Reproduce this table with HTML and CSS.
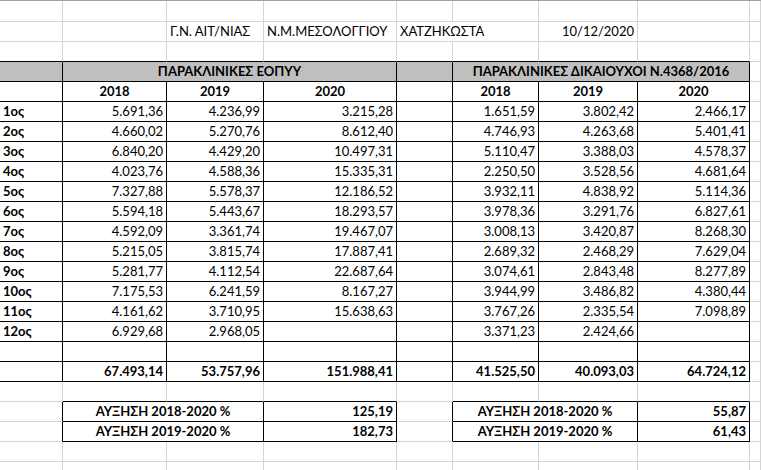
FILE: index.html
```html
<!DOCTYPE html>
<html lang="el">
<head>
<meta charset="utf-8">
<title>Παρακλινικές</title>
<link rel="stylesheet" href="styles.css">
</head>
<body>
<div class="sheet">
  <!-- row 1 -->
  <div class="c"></div><div class="c"></div><div class="c"></div><div class="c"></div><div class="c"></div><div class="c"></div><div class="c"></div><div class="c"></div><div class="c"></div>
  <!-- row 2 -->
  <div class="c"></div><div class="c"></div><div class="c">Γ.Ν. ΑΙΤ/ΝΙΑΣ</div><div class="c">Ν.Μ.ΜΕΣΟΛΟΓΓΙΟΥ</div><div class="c nogrid">ΧΑΤΖΗΚΩΣΤΑ</div><div class="c"></div><div class="c r">10/12/2020</div><div class="c"></div><div class="c"></div>
  <!-- row 3 -->
  <div class="c kb"></div><div class="c kb"></div><div class="c kb"></div><div class="c kb"></div><div class="c kb"></div><div class="c kb"></div><div class="c kb"></div><div class="c kb"></div><div class="c"></div>
  <!-- row 4 -->
  <div class="c g kr kb"></div><div class="c g kr kb b m s3">ΠΑΡΑΚΛΙΝΙΚΕΣ ΕΟΠΥΥ</div><div class="c g kr kb"></div><div class="c g kr kb b m s3">ΠΑΡΑΚΛΙΝΙΚΕΣ ΔΙΚΑΙΟΥΧΟΙ Ν.4368/2016</div><div class="c"></div>
  <!-- row 5 -->
  <div class="c kr kb"></div><div class="c kr kb b m">2018</div><div class="c kr kb b m">2019</div><div class="c kr kb b m">2020</div><div class="c kr kb"></div><div class="c kr kb b m">2018</div><div class="c kr kb b m">2019</div><div class="c kr kb b m">2020</div><div class="c"></div>
  <!-- data -->
  <div class="c kr kb b">1ος</div><div class="c kr kb r">5.691,36</div><div class="c kr kb r">4.236,99</div><div class="c kr kb r">3.215,28</div><div class="c kr kb"></div><div class="c kr kb r">1.651,59</div><div class="c kr kb r">3.802,42</div><div class="c kr kb r">2.466,17</div><div class="c"></div>
  <div class="c kr kb b">2ος</div><div class="c kr kb r">4.660,02</div><div class="c kr kb r">5.270,76</div><div class="c kr kb r">8.612,40</div><div class="c kr kb"></div><div class="c kr kb r">4.746,93</div><div class="c kr kb r">4.263,68</div><div class="c kr kb r">5.401,41</div><div class="c"></div>
  <div class="c kr kb b">3ος</div><div class="c kr kb r">6.840,20</div><div class="c kr kb r">4.429,20</div><div class="c kr kb r">10.497,31</div><div class="c kr kb"></div><div class="c kr kb r">5.110,47</div><div class="c kr kb r">3.388,03</div><div class="c kr kb r">4.578,37</div><div class="c"></div>
  <div class="c kr kb b">4ος</div><div class="c kr kb r">4.023,76</div><div class="c kr kb r">4.588,36</div><div class="c kr kb r">15.335,31</div><div class="c kr kb"></div><div class="c kr kb r">2.250,50</div><div class="c kr kb r">3.528,56</div><div class="c kr kb r">4.681,64</div><div class="c"></div>
  <div class="c kr kb b">5ος</div><div class="c kr kb r">7.327,88</div><div class="c kr kb r">5.578,37</div><div class="c kr kb r">12.186,52</div><div class="c kr kb"></div><div class="c kr kb r">3.932,11</div><div class="c kr kb r">4.838,92</div><div class="c kr kb r">5.114,36</div><div class="c"></div>
  <div class="c kr kb b">6ος</div><div class="c kr kb r">5.594,18</div><div class="c kr kb r">5.443,67</div><div class="c kr kb r">18.293,57</div><div class="c kr kb"></div><div class="c kr kb r">3.978,36</div><div class="c kr kb r">3.291,76</div><div class="c kr kb r">6.827,61</div><div class="c"></div>
  <div class="c kr kb b">7ος</div><div class="c kr kb r">4.592,09</div><div class="c kr kb r">3.361,74</div><div class="c kr kb r">19.467,07</div><div class="c kr kb"></div><div class="c kr kb r">3.008,13</div><div class="c kr kb r">3.420,87</div><div class="c kr kb r">8.268,30</div><div class="c"></div>
  <div class="c kr kb b">8ος</div><div class="c kr kb r">5.215,05</div><div class="c kr kb r">3.815,74</div><div class="c kr kb r">17.887,41</div><div class="c kr kb"></div><div class="c kr kb r">2.689,32</div><div class="c kr kb r">2.468,29</div><div class="c kr kb r">7.629,04</div><div class="c"></div>
  <div class="c kr kb b">9ος</div><div class="c kr kb r">5.281,77</div><div class="c kr kb r">4.112,54</div><div class="c kr kb r">22.687,64</div><div class="c kr kb"></div><div class="c kr kb r">3.074,61</div><div class="c kr kb r">2.843,48</div><div class="c kr kb r">8.277,89</div><div class="c"></div>
  <div class="c kr kb b">10ος</div><div class="c kr kb r">7.175,53</div><div class="c kr kb r">6.241,59</div><div class="c kr kb r">8.167,27</div><div class="c kr kb"></div><div class="c kr kb r">3.944,99</div><div class="c kr kb r">3.486,82</div><div class="c kr kb r">4.380,44</div><div class="c"></div>
  <div class="c kr kb b">11ος</div><div class="c kr kb r">4.161,62</div><div class="c kr kb r">3.710,95</div><div class="c kr kb r">15.638,63</div><div class="c kr kb"></div><div class="c kr kb r">3.767,26</div><div class="c kr kb r">2.335,54</div><div class="c kr kb r">7.098,89</div><div class="c"></div>
  <div class="c kr kb b">12ος</div><div class="c kr kb r">6.929,68</div><div class="c kr kb r">2.968,05</div><div class="c kr kb r"></div><div class="c kr kb"></div><div class="c kr kb r">3.371,23</div><div class="c kr kb r">2.424,66</div><div class="c kr kb r"></div><div class="c"></div>
  <!-- empty bordered row -->
  <div class="c kr kb"></div><div class="c kr kb"></div><div class="c kr kb"></div><div class="c kr kb"></div><div class="c kr kb"></div><div class="c kr kb"></div><div class="c kr kb"></div><div class="c kr kb"></div><div class="c"></div>
  <!-- totals -->
  <div class="c kr kb"></div><div class="c kr kb r b">67.493,14</div><div class="c kr kb r b">53.757,96</div><div class="c kr kb r b">151.988,41</div><div class="c kr kb"></div><div class="c kr kb r b">41.525,50</div><div class="c kr kb r b">40.093,03</div><div class="c kr kb r b">64.724,12</div><div class="c"></div>
  <!-- spacer -->
  <div class="c"></div><div class="c kb"></div><div class="c kb"></div><div class="c kb"></div><div class="c"></div><div class="c kb"></div><div class="c kb"></div><div class="c kb"></div><div class="c"></div>
  <!-- increases -->
  <div class="c kr"></div><div class="c kr kb b m s2">ΑΥΞΗΣΗ 2018-2020 %</div><div class="c kr kb b r">125,19</div><div class="c kr"></div><div class="c kr kb b m s2">ΑΥΞΗΣΗ 2018-2020 %</div><div class="c kr kb b r">55,87</div><div class="c"></div>
  <div class="c kr"></div><div class="c kr kb b m s2">ΑΥΞΗΣΗ 2019-2020 %</div><div class="c kr kb b r">182,73</div><div class="c kr"></div><div class="c kr kb b m s2">ΑΥΞΗΣΗ 2019-2020 %</div><div class="c kr kb b r">61,43</div><div class="c"></div>
  <!-- trailing rows -->
  <div class="c"></div><div class="c"></div><div class="c"></div><div class="c"></div><div class="c"></div><div class="c"></div><div class="c"></div><div class="c"></div><div class="c"></div>
  <div class="c"></div><div class="c"></div><div class="c"></div><div class="c"></div><div class="c"></div><div class="c"></div><div class="c"></div><div class="c"></div><div class="c"></div>
</div>
</body>
</html>
```
FILE: styles.css
```css
html, body {
  margin: 0;
  padding: 0;
  background: #ffffff;
}
body {
  width: 761px;
  height: 470px;
  overflow: hidden;
  font-family: "Lato", "Noto Sans", sans-serif;
  font-size: 13px;
  color: #000000;
}
.sheet {
  display: grid;
  grid-template-columns: 63px 104px 97px 133px 56px 86px 99px 112px 1fr;
  grid-template-rows: 21px repeat(23, 20px);
  border-top: 1px solid #a3a3a3;
}
.c {
  box-sizing: border-box;
  border-right: 1px solid #d4d4d4;
  border-bottom: 1px solid #d4d4d4;
  padding: 0 3px 0 3px;
  line-height: 19px;
  white-space: nowrap;
  overflow: visible;
  min-width: 0;
}
.r { text-align: right; }
.m { text-align: center; }
.b { font-weight: 700; }
.g { background: #bfbfbf; }
.kr { border-right-color: #000000; }
.kb { border-bottom-color: #000000; }
.s2 { grid-column: span 2; }
.s3 { grid-column: span 3; }
.nogrid { border-right-color: #ffffff; }
```
